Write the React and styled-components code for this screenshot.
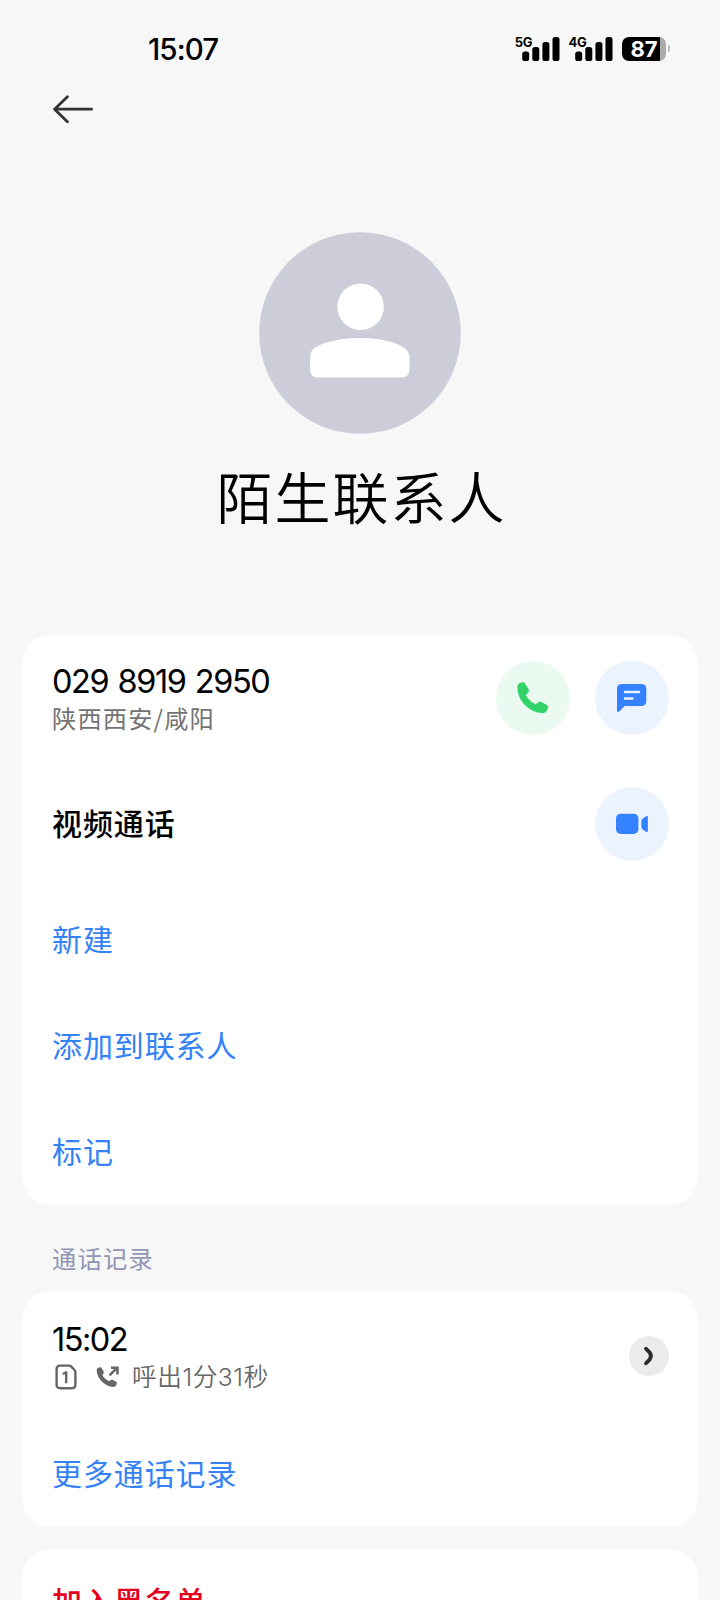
import React from 'react';
import styled, { createGlobalStyle } from 'styled-components';

const GlobalStyle = createGlobalStyle`
  * {
    box-sizing: border-box;
  }

  body {
    margin: 0;
    background: #f7f7f7;
    font-family: 'Inter', 'Noto Sans CJK SC', sans-serif;
  }
`

const Signal = ({ label }) => (
  <SignalStyling>
    <SignalLabel>{label}</SignalLabel>
    <svg width="38" height="24" viewBox="0 0 38 24">
      <rect x="0.2" y="14.500" width="7" height="9.500" rx="2.6" />
      <rect x="10.3" y="10" width="7" height="14" rx="2.6" />
      <rect x="20.4" y="5" width="7" height="19" rx="2.6" />
      <rect x="30.5" y="0" width="7" height="24" rx="2.6" />
    </svg>
  </SignalStyling>
)

const BackIcon = () => (
  <svg width="42" height="30" viewBox="0 0 42 30" fill="none" stroke="#333" strokeWidth="2.8" strokeLinecap="round" strokeLinejoin="round">
    <path d="M39.600 14.200H2.600M15.400 1.700L2.600 14.200L15.400 26.700" />
  </svg>
)

const PersonIcon = () => (
  <svg width="202" height="202" viewBox="0 0 202 202">
    <circle cx="101" cy="101" r="100.8" fill="#cccdd9" />
    <circle cx="101.6" cy="74.8" r="23.3" fill="#fff" />
    <path d="M51 126C51 119.500 54 116.500 58 114.500C69 109 83 106 101 106C119 106 133 109 143 114.500C148 117.500 150.500 120.500 150.500 126V137Q150.500 145.500 142.500 145.500H59Q51 145.500 51 137Z" fill="#fff" />
  </svg>
)

const PhoneIcon = () => (
  <svg width="74" height="74" viewBox="0 0 74 74">
    <path d="M21.400 26.500C21.200 24.500 22 23.200 23.500 22.300L26 21.300C27.300 20.900 28.200 21.200 28.900 22.300L32.600 28.300C33.200 29.400 33.100 30.300 32.300 31.300L30 34.200C31.800 38 35.800 41.600 39.800 43.200L42.300 41.200C43.200 40.500 44.200 40.500 45.400 41L50.900 44C52.200 44.700 52.500 45.900 51.900 47.200L50.500 49.900C49.800 51.200 48.700 52 47.200 52C34 52.300 21.600 40.300 21.400 26.500Z" fill="#34d36a" />
  </svg>
)

const MessageIcon = () => (
  <svg width="74" height="74" viewBox="0 0 74 74">
    <path d="M27 23H46.300Q51.300 23 51.300 28V40Q51.300 45 46.300 45H29.700L24.500 50.300C23.400 51.400 22 50.900 22 49.300V28Q22 23 27 23Z" fill="#3482ff" />
    <path d="M30 31H44M30 37.600H37.500" stroke="#ebf3ff" strokeWidth="2.5" strokeLinecap="round" />
  </svg>
)

const VideoIcon = () => (
  <svg width="74" height="74" viewBox="0 0 74 74" fill="#3482ff">
    <rect x="21" y="26.700" width="22.400" height="20.300" rx="4.800" />
    <path d="M52.900 30.200V44C52.900 44.900 52.200 45.200 51.400 44.900L48.300 43C46.900 42 46.400 40.800 46.400 39.300V34.600C46.400 33 47 31.700 48.300 30.900L51.400 29.200C52.200 28.900 52.900 29.300 52.900 30.200Z" />
  </svg>
)

const SimIcon = () => (
  <SimStyling>
    <svg width="22" height="26" viewBox="0 0 22 26" fill="none" stroke="#666" strokeWidth="2.400" strokeLinejoin="round">
      <path d="M5 1.600H14.200Q15.300 1.600 16.100 2.400L19.500 6Q20.400 7 20.400 8.200V20.400Q20.400 24.200 16.600 24.200H5.200Q1.600 24.200 1.600 20.400V5.200Q1.600 1.600 5 1.600Z" />
      <path d="M7.800 10L11.200 8.300V19.300" />
    </svg>
  </SimStyling>
)

const OutgoingIcon = () => (
  <svg width="24" height="22" viewBox="0 0 24 22">
    <path d="M0.700 4.500C0.700 2.900 1.500 2 2.700 1.500C4 1 5 1.200 5.700 2.300L7.500 5.300C8 6.300 7.900 7 7.200 7.900L6.300 9.100C7.900 12 10.200 14 13.100 15.300L14.500 14.200C15.200 13.600 16 13.500 16.900 14L19.800 15.600C20.800 16.200 21.100 17.200 20.600 18.300C20 20 19 21 17.500 21C9.200 20.800 0.900 12.600 0.700 4.500Z" fill="#666" />
    <path d="M13.500 9.300L21.200 1.700M15 1.700H21.500V8.500" fill="none" stroke="#666" strokeWidth="2.500" />
  </svg>
)

const App = () => {
  return (
    <Page>
      <GlobalStyle />
      <StatusBar>
        <Clock>15:07</Clock>
        <StatusIcons>
          <Signal label="5G" />
          <Signal label="4G" />
          <Battery>
            <BatteryLevel>87</BatteryLevel>
            <BatteryNub />
          </Battery>
        </StatusIcons>
      </StatusBar>
      <TopBar><BackIcon /></TopBar>

      <Profile>
        <PersonIcon />
        <Name>陌生联系人</Name>
      </Profile>

      <Card>
        <Row $height="126px">
          <RowLines>
            <Primary $spacing="-1.4px">029 8919 2950</Primary>
            <Secondary>陕西西安/咸阳</Secondary>
          </RowLines>
          <Actions>
            <RoundButton $color="#eafaf0"><PhoneIcon /></RoundButton>
            <RoundButton $color="#ebf3ff"><MessageIcon /></RoundButton>
          </Actions>
        </Row>
        <Row $height="126px">
          <RowText $weight="500">视频通话</RowText>
          <RoundButton $color="#ebf3ff"><VideoIcon /></RoundButton>
        </Row>
        <Row><RowText $color="#3482f6">新建</RowText></Row>
        <Row><RowText $color="#3482f6">添加到联系人</RowText></Row>
        <Row><RowText $color="#3482f6">标记</RowText></Row>
      </Card>

      <SectionLabel>通话记录</SectionLabel>

      <Card>
        <Row $height="130px">
          <RowLines>
            <Primary $spacing="-1.5px">15:02</Primary>
            <CallDetail>
              <SimIcon />
              <OutgoingIcon />
              <DetailText>呼出1分31秒</DetailText>
            </CallDetail>
          </RowLines>
          <MoreButton>
            <svg width="40" height="40" viewBox="0 0 40 40" fill="none" stroke="#2b2b2b" strokeWidth="3.800" strokeLinecap="round" strokeLinejoin="round">
              <path d="M17 12.700L20.600 16.400Q23.200 20 20.600 23.600L17 27.300" />
            </svg>
          </MoreButton>
        </Row>
        <Row><RowText $color="#3482f6">更多通话记录</RowText></Row>
      </Card>

      <Card $top="22px">
        <Row><RowText $color="#e60020" $weight="500">加入黑名单</RowText></Row>
      </Card>
    </Page>
  )
}
export default App

const Page = styled.main`
  width: 720px;
  height: 1600px;
  padding: 0 22px;
  overflow: hidden;
  background: #f7f7f7;
  color: #000;
`

const StatusBar = styled.header`
  display: flex;
  justify-content: space-between;
  align-items: center;
  height: 77px;
  padding: 20px 28px 0 126px;
`

const Clock = styled.span`
  font-size: 29.5px;
  font-weight: 500;
  line-height: 36px;
  letter-spacing: -0.9px;
`

const StatusIcons = styled.div`
  display: flex;
  align-items: center;
`

const SignalStyling = styled.div`
  position: relative;
  display: flex;
  margin-right: 15.7px;

  &:nth-child(2) {
    margin-right: 8.6px;
  }
`

/* the network type sits over the shortest bar */
const SignalLabel = styled.span`
  position: absolute;
  top: 0;
  left: -7px;
  font-size: 13px;
  font-weight: 700;
  line-height: 11px;
  letter-spacing: -0.3px;
`

const Battery = styled.div`
  display: flex;
  align-items: center;
  gap: 1.5px;
`

const BatteryLevel = styled.span`
  display: flex;
  justify-content: center;
  align-items: center;
  width: 44px;
  height: 24px;
  border-radius: 7px;
  background: linear-gradient(to right, #000 38px, #aaa 38px);
  color: #fff;
  font-size: 22px;
  font-weight: 700;
  line-height: 24px;
`

const BatteryNub = styled.span`
  width: 2.5px;
  height: 7px;
  border-radius: 0 2px 2px 0;
  background: #bbb;
`

const TopBar = styled.nav`
  display: flex;
  align-items: center;
  height: 65px;
  padding-left: 30px;
`

const Profile = styled.section`
  display: flex;
  flex-direction: column;
  align-items: center;
  height: 492.5px;
  padding-top: 90.3px;
`

const Name = styled.h1`
  margin: 23px 0 0 3px;
  font-size: 56px;
  font-weight: 350;
  line-height: 84px;
  letter-spacing: 2px;
`

const Card = styled.section`
  margin-top: ${(props) => props.$top || '0'};
  border-radius: 28px;
  background: #fff;
`

const Row = styled.div`
  display: flex;
  justify-content: space-between;
  align-items: center;
  height: ${(props) => props.$height || '106.3px'};
  padding: 0 29.3px 0 30px;
`

const RowText = styled.span`
  padding-bottom: 4px;
  color: ${(props) => props.$color || '#000'};
  font-family: 'Noto Sans CJK SC', sans-serif;
  font-size: 30px;
  font-weight: ${(props) => props.$weight || '400'};
  line-height: 44px;
  letter-spacing: 0.9px;
`

const RowLines = styled.div`
  padding-top: 3px;
`

const Primary = styled.div`
  font-size: 32.5px;
  font-weight: 420;
  line-height: 40px;
  letter-spacing: ${(props) => props.$spacing};
  word-spacing: 1.5px;
`

const Secondary = styled.div`
  margin-top: -1.5px;
  color: #737373;
  font-family: 'Noto Sans CJK SC', sans-serif;
  font-size: 24.2px;
  line-height: 36px;
  letter-spacing: 1.2px;
`

const Actions = styled.div`
  display: flex;
  gap: 25px;
`

const RoundButton = styled.button`
  display: flex;
  width: 74px;
  height: 74px;
  padding: 0;
  border: none;
  border-radius: 50%;
  background: ${(props) => props.$color};
`

const SectionLabel = styled.h2`
  height: 85.6px;
  margin: 0;
  padding: 34.5px 30px 0;
  color: #9295b5;
  font-family: 'Noto Sans CJK SC', sans-serif;
  font-size: 24.3px;
  font-weight: 400;
  line-height: 36px;
  letter-spacing: 1.2px;
`

const CallDetail = styled.div`
  display: flex;
  align-items: center;
  height: 36px;
  margin-top: -1.5px;
  padding-left: 3px;
`

const SimStyling = styled.span`
  display: flex;
  margin-right: 19px;
`

const DetailText = styled.span`
  margin-left: 12px;
  color: #666;
  font-size: 24.6px;
  font-weight: 350;
  line-height: 36px;
  letter-spacing: 0.6px;
`

const MoreButton = styled.button`
  display: flex;
  width: 40px;
  height: 40px;
  padding: 0;
  border: none;
  border-radius: 50%;
  background: #ebebeb;
`
